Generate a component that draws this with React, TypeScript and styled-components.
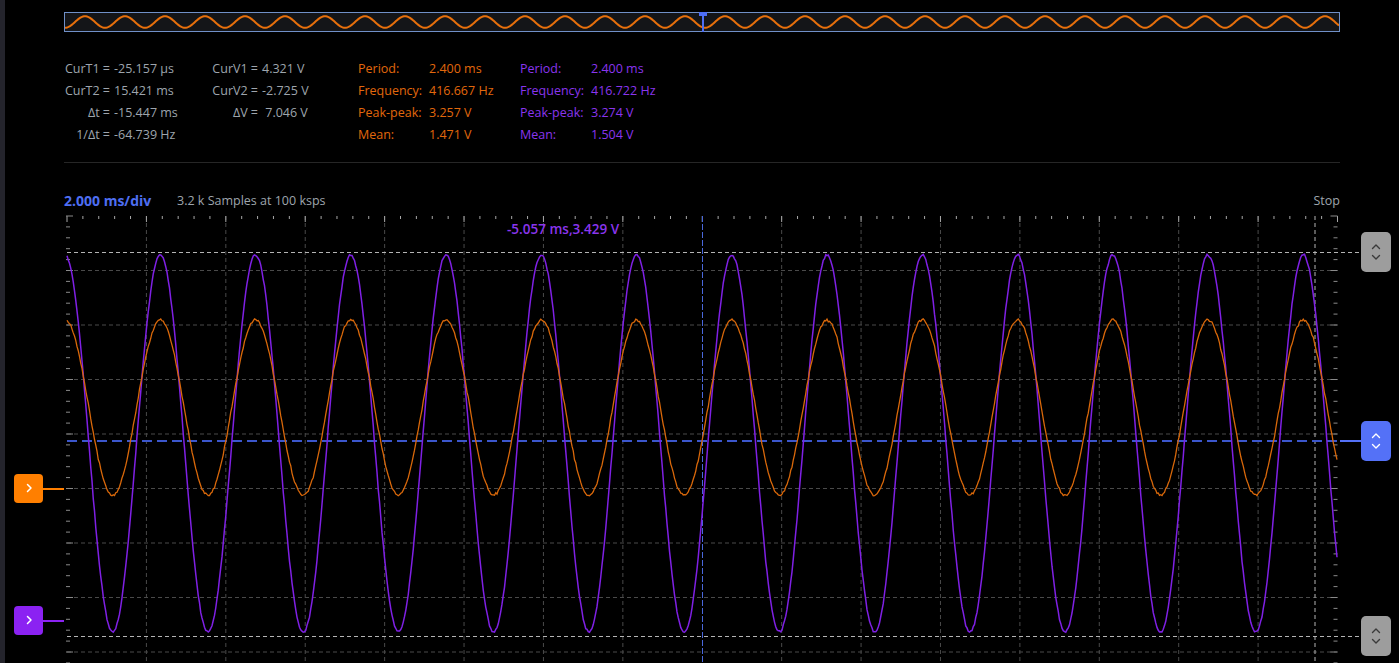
import React from 'react';
import styled, { createGlobalStyle } from 'styled-components';

const GlobalStyle = createGlobalStyle`
  html, body {
    margin: 0;
    padding: 0;
    background: #000;
  }
  body {
    font-family: "Open Sans", "Noto Sans", sans-serif;
  }
`;

const GRAY = '#9ea5ad';
const ORANGE = '#e2680c';
const PURPLE = '#8a35ee';
const BLUE = '#4e6ef2';

// graticule, in page coordinates
const L = 67;
const R = 1337.5;
const T = 216;
const DX = (R - L) / 16;
const DY = 54.5;
const BOTTOM = 663;
const PERIOD = 95.25;
const PEAK_X = 160.3;

const Shell = styled.div`
  display: flex;
  width: 1399px;
  height: 663px;
  overflow: hidden;
  background: #000;
`;

const SideRail = styled.div`
  width: 5px;
  flex-shrink: 0;
  background: #24242c;
`;

const Main = styled.div`
  flex: 1;
  display: flex;
  flex-direction: column;
  padding-top: 12px;
  min-width: 0;
`;

const Overview = styled.div`
  position: relative;
  margin-left: 59px;
  width: 1276px;
  height: 20px;
  box-sizing: border-box;
  border: 1px solid #7090c8;
  background: #141518;
`;

const OverviewWave = styled.svg`
  display: block;
  width: 1274px;
  height: 18px;
`;

const OverviewCursor = styled.div`
  position: absolute;
  left: 634px;
  top: -1px;
  width: 8px;
  height: 4px;
  background: #4d6ef5;

  &::after {
    content: '';
    position: absolute;
    left: 3px;
    top: 0;
    width: 2px;
    height: 20px;
    background: #4d6ef5;
  }
`;

const Readout = styled.div`
  margin: 26px 0 0 59px;
  width: 1276px;
  display: grid;
  grid-template-columns: 50px 98px 50px 96px 71px 91px 71px 1fr;
  grid-auto-rows: 22px;
  font-size: 12.5px;
  line-height: 22px;
`;

type Tone = 'gray' | 'orange' | 'purple';
const toneColor: Record<Tone, string> = { gray: GRAY, orange: ORANGE, purple: PURPLE };

const Cell = styled.span<{ $tone: Tone; $right?: boolean }>`
  color: ${({ $tone }) => toneColor[$tone]};
  text-align: ${({ $right }) => ($right ? 'right' : 'left')};
  padding-right: ${({ $right }) => ($right ? '4px' : '0')};
  white-space: pre;
`;

const Divider = styled.div`
  margin: 16px 0 0 59px;
  width: 1276px;
  height: 1px;
  background: #262626;
`;

const ScaleBar = styled.div`
  margin: 28px 0 0 59px;
  width: 1276px;
  height: 18px;
  display: flex;
  align-items: center;
  font-size: 12.5px;
  color: ${GRAY};
`;

const TimeBase = styled.span`
  width: 113px;
  color: ${BLUE};
  font-weight: 700;
  font-size: 14px;
`;

const Samples = styled.span``;

const RunState = styled.span`
  margin-left: auto;
`;

const ScopeRow = styled.div`
  margin-top: 3px;
  flex: 1;
  display: flex;
  min-height: 0;
`;

const MarkerGutter = styled.div`
  position: relative;
  width: 59px;
  flex-shrink: 0;
`;

const PlotSvg = styled.svg`
  display: block;
  width: 1297px;
  height: 451px;
  flex-shrink: 0;
`;

const ButtonGutter = styled.div`
  position: relative;
  flex: 1;
`;

const ChannelMarker = styled.div<{ $color: string; $top: number }>`
  position: absolute;
  left: 9px;
  top: ${({ $top }) => $top}px;
  width: 29px;
  height: 29px;
  border-radius: 4px;
  background: ${({ $color }) => $color};
  display: flex;
  align-items: center;
  justify-content: center;

  &::after {
    content: '';
    position: absolute;
    left: 29px;
    top: 14px;
    width: 21px;
    height: 2px;
    background: ${({ $color }) => $color};
  }
`;

const LevelButton = styled.button<{ $active?: boolean; $top: number }>`
  position: absolute;
  left: 0;
  top: ${({ $top }) => $top}px;
  width: 30px;
  height: 40px;
  padding: 0;
  border: none;
  border-radius: 5px;
  background: ${({ $active }) => ($active ? '#5471f7' : '#9d9d9d')};
  color: ${({ $active }) => ($active ? '#ffffff' : '#3a3a3a')};
  display: flex;
  align-items: center;
  justify-content: center;
`;

const rows: string[][] = [
  ['CurT1 =', '-25.157 µs', 'CurV1 =', '4.321 V', 'Period:', '2.400 ms', 'Period:', '2.400 ms'],
  ['CurT2 =', '15.421 ms', 'CurV2 =', '-2.725 V', 'Frequency:', '416.667 Hz', 'Frequency:', '416.722 Hz'],
  ['Δt =', '-15.447 ms', 'ΔV =', ' 7.046 V', 'Peak-peak:', '3.257 V', 'Peak-peak:', '3.274 V'],
  ['1/Δt =', '-64.739 Hz', '', '', 'Mean:', '1.471 V', 'Mean:', '1.504 V'],
];
const colTone: Tone[] = ['gray', 'gray', 'gray', 'gray', 'orange', 'orange', 'purple', 'purple'];

const mkRand = (seed: number) => {
  let s = seed;
  return () => {
    s = (s * 16807) % 2147483647;
    return s / 2147483647;
  };
};

const tracePath = (cy: number, amp: number, seed: number) => {
  const r = mkRand(seed);
  let d = '';
  for (let x = L; x <= R; x += 1.25) {
    const raw = cy - amp * Math.cos((2 * Math.PI * (x - PEAK_X)) / PERIOD);
    const y = Math.round(raw / 1.5) * 1.5 + (r() - 0.5) * 1.6;
    d += x === L ? `M${x} ${y.toFixed(1)}` : ` L${x.toFixed(2)} ${y.toFixed(1)}`;
  }
  return d;
};

const overviewPath = () => {
  let d = '';
  for (let x = 65; x <= 1339; x += 1) {
    const y = 22 - 5.8 * Math.cos((2 * Math.PI * (x - 85)) / 40);
    d += x === 65 ? `M${x} ${y.toFixed(2)}` : ` L${x} ${y.toFixed(2)}`;
  }
  return d;
};

const UpDown = () => (
  <svg width="10" height="18" viewBox="0 0 10 18" fill="none" stroke="currentColor" strokeWidth="1.4" strokeLinecap="round" strokeLinejoin="round">
    <path d="M1.5 5.5 L5 2 L8.5 5.5" />
    <path d="M1.5 12.5 L5 16 L8.5 12.5" />
  </svg>
);

const Chevron = () => (
  <svg width="8" height="10" viewBox="0 0 8 10" fill="none" stroke="#fff" strokeWidth="1.5" strokeLinecap="round" strokeLinejoin="round">
    <path d="M2.5 1.5 L6 5 L2.5 8.5" />
  </svg>
);

const Graticule = () => {
  const vLines = Array.from({ length: 15 }, (_, i) => L + (i + 1) * DX).filter((_, i) => i !== 7);
  const hLines = Array.from({ length: 8 }, (_, j) => T + (j + 1) * DY);
  const topTicks = Array.from({ length: 81 }, (_, k) => k);
  const sideTicks = Array.from({ length: 42 }, (_, m) => m);
  return (
    <g>
      {vLines.map((x) => (
        <line key={`v${x}`} x1={x} x2={x} y1={T} y2={BOTTOM} stroke="#4a4a4a" strokeDasharray="4 3" />
      ))}
      {hLines.map((y) => (
        <line key={`h${y}`} x1={L} x2={R} y1={y} y2={y} stroke="#4a4a4a" strokeDasharray="4 3" />
      ))}
      {topTicks.map((k) => {
        const x = L + (k * DX) / 5;
        return <line key={`t${k}`} x1={x} x2={x} y1={T} y2={T + (k % 5 === 0 ? 6 : 3)} stroke="#a8a8a8" />;
      })}
      {sideTicks.map((m) => {
        const y = T + (m * DY) / 5;
        const len = m % 5 === 0 ? 7 : 4;
        return (
          <g key={`s${m}`}>
            <line x1={L - 1} x2={L - 1 + len} y1={y} y2={y} stroke="#8a8a8a" />
            <line x1={R - len} x2={R} y1={y} y2={y} stroke="#8a8a8a" />
          </g>
        );
      })}
    </g>
  );
};

const App: React.FC = () => {
  const orange = tracePath(407.5, 87.5, 11);
  const purple = tracePath(443.5, 188.5, 29);
  return (
    <>
      <GlobalStyle />
      <Shell>
        <SideRail />
        <Main>
          <Overview>
            <OverviewWave viewBox="65 13 1274 18">
              <path d={overviewPath()} fill="none" stroke="#e8700c" strokeWidth="2" />
            </OverviewWave>
            <OverviewCursor />
          </Overview>

          <Readout>
            {rows.map((row, ri) =>
              row.map((text, ci) => (
                <Cell key={`${ri}-${ci}`} $tone={colTone[ci]} $right={ci === 0 || ci === 2}>
                  {text}
                </Cell>
              ))
            )}
          </Readout>

          <Divider />

          <ScaleBar>
            <TimeBase>2.000 ms/div</TimeBase>
            <Samples>3.2 k Samples at 100 ksps</Samples>
            <RunState>Stop</RunState>
          </ScaleBar>

          <ScopeRow>
            <MarkerGutter>
              <ChannelMarker $color="#ff7f00" $top={261.5}>
                <Chevron />
              </ChannelMarker>
              <ChannelMarker $color="#8b22f2" $top={393.5}>
                <Chevron />
              </ChannelMarker>
            </MarkerGutter>

            <PlotSvg viewBox="64 212 1297 451">
              <Graticule />
              {/* time cursor / center */}
              <line x1={702.5} x2={702.5} y1={T} y2={BOTTOM} stroke="#4a68dc" strokeDasharray="6 2" />
              <line x1={1315} x2={1315} y1={T} y2={BOTTOM} stroke="#b4b4b4" strokeDasharray="4 3" />
              {/* voltage cursors */}
              <line x1={L} x2={1361} y1={252.5} y2={252.5} stroke="#b4b4b4" strokeDasharray="4 3" />
              <line x1={L} x2={1361} y1={636.5} y2={636.5} stroke="#b4b4b4" strokeDasharray="4 3" />
              {/* trigger level */}
              <line x1={L} x2={1340} y1={441} y2={441} stroke="#3b56cc" strokeWidth="2" strokeDasharray="10 5" />
              <line x1={1340} x2={1361} y1={441} y2={441} stroke="#5471f7" strokeWidth="2" />

              <path d={purple} fill="none" stroke="#7f20e4" strokeWidth="1.5" />
              <path d={orange} fill="none" stroke="#d9680a" strokeWidth="1.3" />

              <text x={507} y={234} fill={PURPLE} fontSize="13.5" fontWeight="600" fontFamily="Open Sans, sans-serif">
                -5.057 ms,3.429 V
              </text>
            </PlotSvg>

            <ButtonGutter>
              <LevelButton $top={20}>
                <UpDown />
              </LevelButton>
              <LevelButton $active $top={209}>
                <UpDown />
              </LevelButton>
              <LevelButton $top={404}>
                <UpDown />
              </LevelButton>
            </ButtonGutter>
          </ScopeRow>
        </Main>
      </Shell>
    </>
  );
};

export default App;
